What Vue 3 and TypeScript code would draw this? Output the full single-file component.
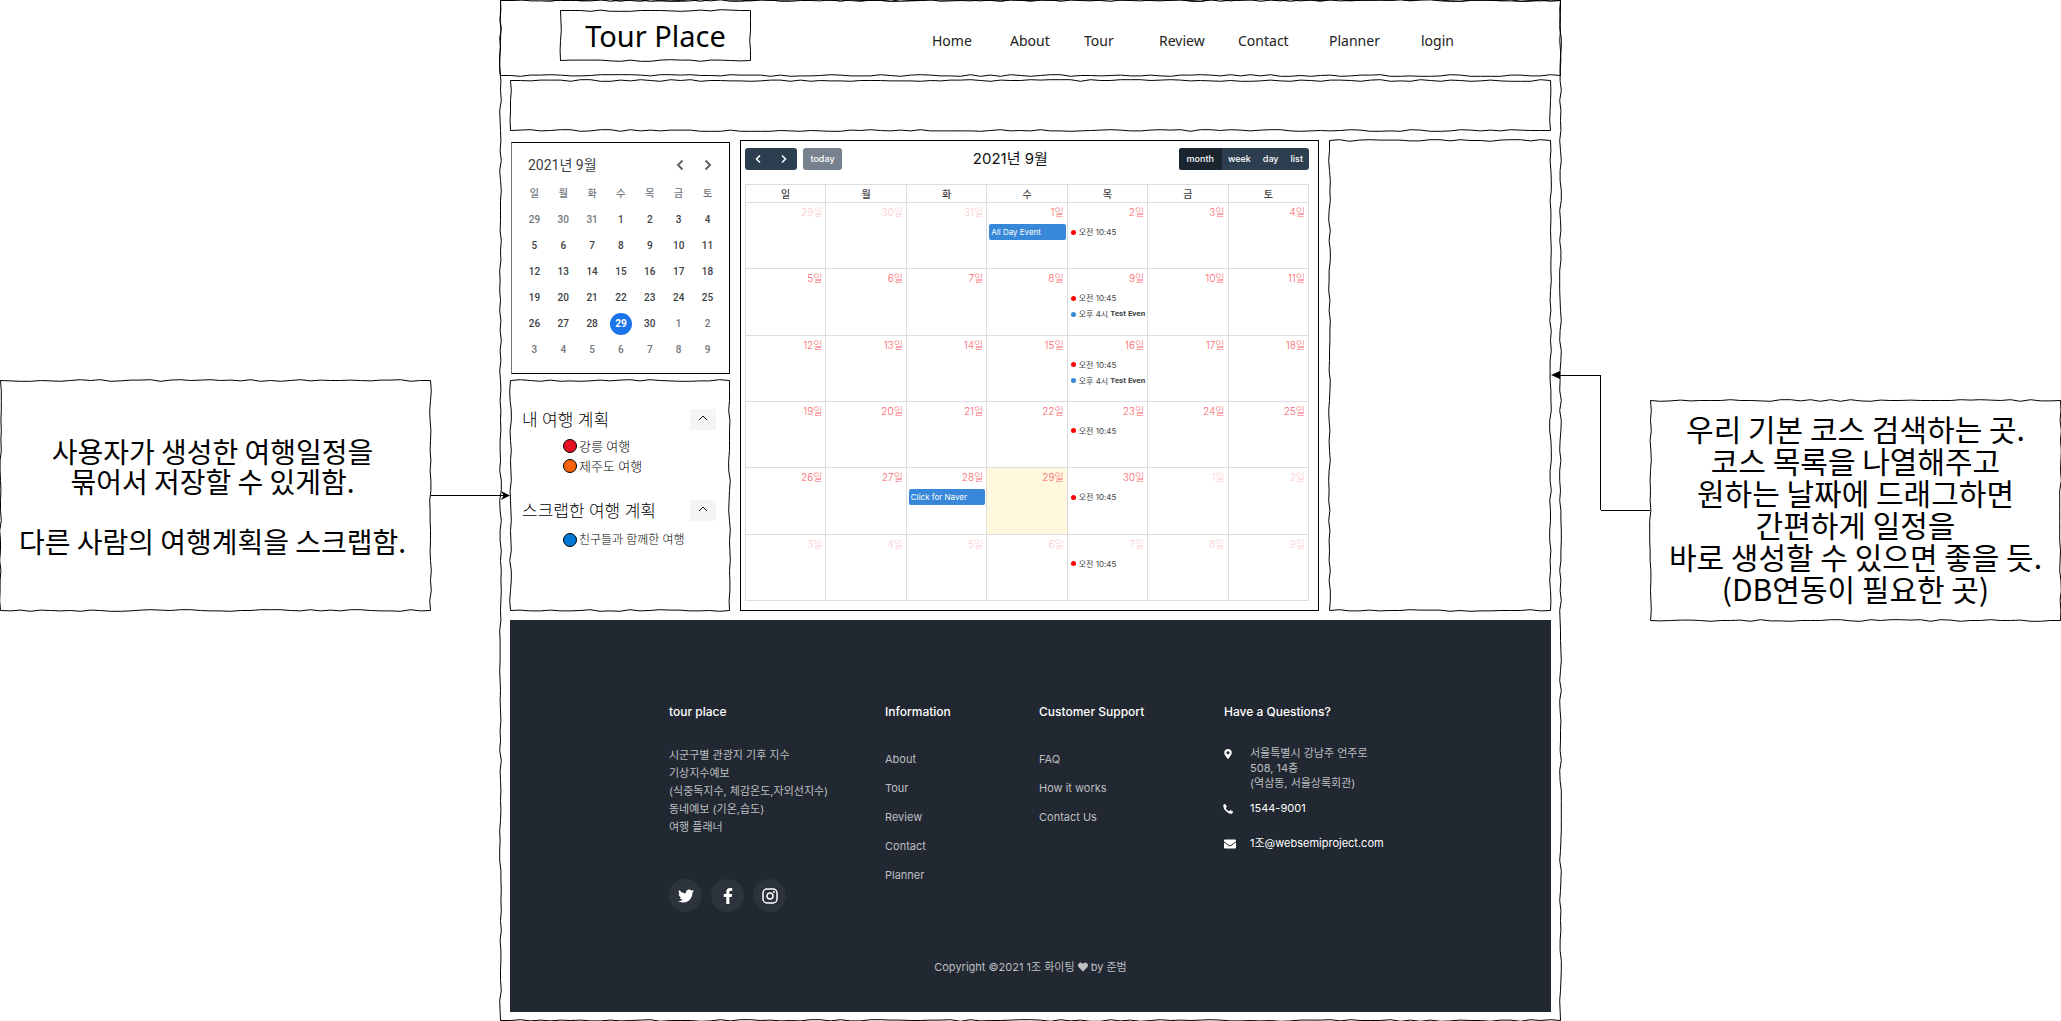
<script setup lang="ts">
import { defineComponent, h, onBeforeUnmount, onMounted, ref } from 'vue'

/* Hand-drawn outline that follows the size of the box it sits in. */
const SketchFrame = defineComponent({
  props: { seed: { type: Number, default: 1 } },
  setup(props) {
    const svg = ref<SVGSVGElement | null>(null)
    const outline = ref('')
    let observer: ResizeObserver | undefined

    function draw() {
      if (!svg.value) return
      const box = svg.value.getBoundingClientRect()
      const right = box.width - 0.5
      const bottom = box.height - 0.5
      let state = props.seed * 7919
      const wobble = () => {
        state = (state * 1103515245 + 12345) % 2147483648
        return (Math.floor(state / 65536) % 5) * 0.4 - 0.8
      }
      const edge = (x1: number, y1: number, x2: number, y2: number) => {
        const length = Math.abs(x2 - x1) + Math.abs(y2 - y1)
        const across = y1 === y2
        const steps = Math.max(1, Math.round(length / 10))
        let points = ''
        for (let i = 1; i < steps; i++) {
          const x = x1 + ((x2 - x1) * i) / steps + (across ? 0 : wobble())
          const y = y1 + ((y2 - y1) * i) / steps + (across ? wobble() : 0)
          points += `L${x.toFixed(2)} ${y.toFixed(2)}`
        }
        return `${points}L${x2} ${y2}`
      }
      outline.value =
        'M0.5 0.5' +
        edge(0.5, 0.5, right, 0.5) +
        edge(right, 0.5, right, bottom) +
        edge(right, bottom, 0.5, bottom) +
        edge(0.5, bottom, 0.5, 0.5) +
        'Z'
    }

    onMounted(() => {
      draw()
      observer = new ResizeObserver(draw)
      if (svg.value) observer.observe(svg.value)
    })
    onBeforeUnmount(() => observer?.disconnect())

    return () =>
      h('svg', { ref: svg, class: 'sketch', 'aria-hidden': 'true' }, [
        h('path', { d: outline.value, fill: 'none', stroke: '#000', 'stroke-width': 1 }),
      ])
  },
})

interface CalendarEvent {
  kind: 'block' | 'red' | 'blue'
  time?: string
  title?: string
}
interface Day {
  date: number
  outside: boolean
  today: boolean
  events: CalendarEvent[]
}

const navItems = ['Home', 'About', 'Tour', 'Review', 'Contact', 'Planner', 'login']
const weekdays = ['일', '월', '화', '수', '목', '금', '토']

const weeks: Day[][] = Array.from({ length: 6 }, (_, week) =>
  Array.from({ length: 7 }, (_, weekday) => {
    const offset = week * 7 + weekday - 2
    const date = offset < 1 ? offset + 31 : offset > 30 ? offset - 30 : offset
    const outside = offset < 1 || offset > 30
    const events: CalendarEvent[] = []
    if (offset === 1) events.push({ kind: 'block', title: 'All Day Event' })
    if (offset === 28) events.push({ kind: 'block', title: 'Click for Naver' })
    if (weekday === 4) events.push({ kind: 'red', time: '오전 10:45' })
    if (offset === 9 || offset === 16) {
      events.push({ kind: 'blue', time: '오후 4시', title: 'Test Even' })
    }
    return { date, outside, today: offset === 29, events }
  }),
)

const views = ['month', 'week', 'day', 'list']
const activeView = ref('month')

const plans = [
  {
    title: '내 여행 계획',
    items: [
      { label: '강릉 여행', tone: 'red' },
      { label: '제주도 여행', tone: 'orange' },
    ],
  },
  {
    title: '스크랩한 여행 계획',
    items: [{ label: '친구들과 함께한 여행', tone: 'blue' }],
  },
]

const infoLinks = ['About', 'Tour', 'Review', 'Contact', 'Planner']
const supportLinks = ['FAQ', 'How it works', 'Contact Us']
</script>

<template>
  <div class="board">
    <aside class="note note-left">
      <SketchFrame :seed="3" />
      <p>사용자가 생성한 여행일정을<br />묶어서 저장할 수 있게함.<br /><br />다른 사람의 여행계획을 스크랩함.</p>
    </aside>

    <div class="link-left" aria-hidden="true">
      <span class="line"></span>
      <svg class="arrow" viewBox="0 0 9 9"><path d="M0 0L9 4.5L0 9L2.5 4.5Z" /></svg>
    </div>

    <main class="site">
      <SketchFrame :seed="5" />
      <header class="top">
        <SketchFrame :seed="8" />
        <h1 class="logo"><SketchFrame :seed="11" />Tour Place</h1>
        <nav class="nav">
          <a v-for="item in navItems" :key="item" href="#">{{ item }}</a>
        </nav>
      </header>

      <div class="content">
        <section class="banner"><SketchFrame :seed="14" /></section>

        <div class="columns">
          <div class="side">
            <section class="mini">
              <div class="mini-head">
                <h2>2021년 9월</h2>
                <button type="button" aria-label="이전 달">
                  <svg viewBox="0 0 8 10"><path d="M6.5 0.5L2 5L6.5 9.5" /></svg>
                </button>
                <button type="button" aria-label="다음 달">
                  <svg viewBox="0 0 8 10"><path d="M1.5 0.5L6 5L1.5 9.5" /></svg>
                </button>
              </div>
              <table>
                <thead>
                  <tr><th v-for="name in weekdays" :key="name">{{ name }}</th></tr>
                </thead>
                <tbody>
                  <tr v-for="(week, w) in weeks" :key="w">
                    <td v-for="(day, d) in week" :key="d" :class="{ outside: day.outside }">
                      <span :class="{ today: day.today }">{{ day.date }}</span>
                    </td>
                  </tr>
                </tbody>
              </table>
            </section>

            <section class="plans">
              <SketchFrame :seed="17" />
              <div v-for="group in plans" :key="group.title" class="plan-group">
                <div class="plan-head">
                  <h2>{{ group.title }}</h2>
                  <button type="button" :aria-label="group.title">
                    <svg viewBox="0 0 10 6"><path d="M1 5L5 1L9 5" /></svg>
                  </button>
                </div>
                <ul>
                  <li v-for="item in group.items" :key="item.label">
                    <i :class="['swatch', item.tone]"></i>{{ item.label }}
                  </li>
                </ul>
              </div>
            </section>
          </div>

          <section class="calendar">
            <div class="toolbar">
              <div class="left-tools">
                <div class="group">
                  <button type="button" class="step" aria-label="이전">
                    <svg viewBox="0 0 6 8"><path d="M5 0.5L1.5 4L5 7.5" /></svg>
                  </button>
                  <button type="button" class="step" aria-label="다음">
                    <svg viewBox="0 0 6 8"><path d="M1 0.5L4.5 4L1 7.5" /></svg>
                  </button>
                </div>
                <button type="button" class="today-btn" disabled>today</button>
              </div>
              <h2>2021년 9월</h2>
              <div class="group">
                <button
                  v-for="view in views"
                  :key="view"
                  type="button"
                  :class="['view', { active: view === activeView }]"
                  @click="activeView = view"
                >
                  {{ view }}
                </button>
              </div>
            </div>
            <table>
              <thead>
                <tr><th v-for="name in weekdays" :key="name">{{ name }}</th></tr>
              </thead>
              <tbody>
                <tr v-for="(week, w) in weeks" :key="w">
                  <td v-for="(day, d) in week" :key="d" :class="{ outside: day.outside, today: day.today }">
                    <a class="date" href="#">{{ day.date }}일</a>
                    <div v-for="(event, e) in day.events" :key="e" :class="['event', event.kind]">
                      <i v-if="event.kind !== 'block'" class="dot"></i>
                      <span v-if="event.time">{{ event.time }}</span>
                      <b v-if="event.title">{{ event.title }}</b>
                    </div>
                  </td>
                </tr>
              </tbody>
            </table>
          </section>

          <section class="search"><SketchFrame :seed="20" /></section>
        </div>

        <footer class="footer">
          <div class="footer-grid">
            <div>
              <h3>tour place</h3>
              <p class="about">시군구별 관광지 기후 지수<br />기상지수예보<br />(식중독지수, 체감온도,자외선지수)<br />동네예보 (기온,습도)<br />여행 플래너</p>
              <div class="social">
                <a href="#" aria-label="Twitter">
                  <svg viewBox="0 0 512 512"><path d="M459.37 151.716c.325 4.548.325 9.097.325 13.645 0 138.72-105.583 298.558-298.558 298.558-59.452 0-114.68-17.219-161.137-47.106 8.447.974 16.568 1.299 25.34 1.299 49.055 0 94.213-16.568 130.274-44.832-46.132-.975-84.792-31.188-98.112-72.772 6.498.974 12.995 1.624 19.818 1.624 9.421 0 18.843-1.3 27.614-3.573-48.081-9.747-84.143-51.98-84.143-102.985v-1.299c13.969 7.797 30.214 12.67 47.431 13.319-28.264-18.843-46.781-51.005-46.781-87.391 0-19.492 5.197-37.36 14.294-52.954 51.655 63.675 129.3 105.258 216.365 109.807-1.624-7.797-2.599-15.918-2.599-24.04 0-57.828 46.782-104.934 104.934-104.934 30.213 0 57.502 12.67 76.67 33.137 23.715-4.548 46.456-13.32 66.599-25.34-7.798 24.366-24.366 44.833-46.132 57.827 21.117-2.273 41.584-8.122 60.426-16.243-14.292 20.791-32.161 39.308-52.628 54.253z" /></svg>
                </a>
                <a href="#" aria-label="Facebook">
                  <svg viewBox="0 0 320 512"><path d="M279.14 288l14.22-92.66h-88.91v-60.13c0-25.35 12.42-50.06 52.24-50.06h40.42V6.26S260.43 0 225.36 0c-73.22 0-121.08 44.38-121.08 124.72v70.62H22.89V288h81.39v224h100.17V288z" /></svg>
                </a>
                <a href="#" aria-label="Instagram">
                  <svg viewBox="0 0 16 16">
                    <rect x="1" y="1" width="14" height="14" rx="4" class="ring" />
                    <circle cx="8" cy="8" r="3" class="ring" />
                    <circle cx="12" cy="4" r="1" />
                  </svg>
                </a>
              </div>
            </div>
            <div>
              <h3>Information</h3>
              <ul class="links">
                <li v-for="link in infoLinks" :key="link"><a href="#">{{ link }}</a></li>
              </ul>
            </div>
            <div>
              <h3>Customer Support</h3>
              <ul class="links">
                <li v-for="link in supportLinks" :key="link"><a href="#">{{ link }}</a></li>
              </ul>
            </div>
            <div>
              <h3>Have a Questions?</h3>
              <ul class="contact">
                <li class="address">
                  <svg viewBox="0 0 384 512"><path d="M172.268 501.67C26.97 291.031 0 269.413 0 192 0 85.961 85.961 0 192 0s192 85.961 192 192c0 77.413-26.97 99.031-172.268 309.67-9.535 13.774-29.93 13.773-39.464 0zM192 272c44.183 0 80-35.817 80-80s-35.817-80-80-80-80 35.817-80 80 35.817 80 80 80z" /></svg>
                  <span>서울특별시 강남주 언주로<br />508, 14층<br />(역삼동, 서울상록회관)</span>
                </li>
                <li class="phone">
                  <svg viewBox="0 0 11 11"><path d="M0.3 1.6Q0.6 0.4 2 0.1Q2.6 0 2.9 0.5L4 2.6Q4.2 3.1 3.8 3.5L3 4.3Q3.2 5.2 4.5 6.5T6.7 8L7.5 7.2Q7.9 6.8 8.4 7L10.5 8.1Q11 8.4 10.9 9Q10.6 10.4 9.4 10.7Q7 11.4 3.5 8T0.3 1.6Z" /></svg>
                  <a href="#">1544-9001</a>
                </li>
                <li class="mail">
                  <svg viewBox="0 64 512 384"><path d="M502.3 190.8c3.9-3.1 9.7-.2 9.7 4.7V400c0 26.5-21.5 48-48 48H48c-26.5 0-48-21.5-48-48V195.6c0-5 5.7-7.8 9.7-4.7 22.4 17.4 52.1 39.5 154.1 113.6 21.1 15.4 56.7 47.8 92.2 47.6 35.7.3 72-32.8 92.3-47.6 102-74.1 131.6-96.3 154-113.7zM256 320c23.2.4 56.6-29.2 73.4-41.4 132.7-96.3 142.8-104.7 173.4-128.7 5.8-4.5 9.2-11.5 9.2-18.9v-19c0-26.5-21.5-48-48-48H48c-26.5 0-48 21.5-48 48v19c0 7.4 3.4 14.3 9.2 18.9 30.6 23.9 40.7 32.4 173.4 128.7 16.8 12.2 50.2 41.8 73.4 41.4z" /></svg>
                  <a href="#">1조@websemiproject.com</a>
                </li>
              </ul>
            </div>
          </div>
          <p class="copyright">
            Copyright ©2021 1조 화이팅
            <svg viewBox="0 0 512 512"><path d="M462.3 62.6C407.5 15.9 326 24.3 275.7 76.2L256 96.5l-19.7-20.3C186.1 24.3 104.5 15.9 49.7 62.6c-62.8 53.6-66.1 149.8-9.9 207.9l193.5 199.8c12.5 12.9 32.8 12.9 45.3 0l193.5-199.8c56.3-58.1 53-154.3-9.8-207.9z" /></svg>
            by 준범
          </p>
        </footer>
      </div>
    </main>

    <svg class="link-right" aria-hidden="true">
      <line x1="4" y1="5" x2="50%" y2="5" />
      <line x1="50%" y1="5" x2="50%" y2="140" />
      <line x1="50%" y1="140" x2="100%" y2="140" />
      <path d="M0 5L9 1V9Z" />
    </svg>

    <aside class="note note-right">
      <SketchFrame :seed="23" />
      <p>우리 기본 코스 검색하는 곳.<br />코스 목록을 나열해주고<br />원하는 날짜에 드래그하면<br />간편하게 일정을<br />바로 생성할 수 있으면 좋을 듯.<br />(DB연동이 필요한 곳)</p>
    </aside>
  </div>
</template>

<style>
body {
  margin: 0;
  background: #fff;
}
</style>

<style scoped>
.board {
  display: grid;
  grid-template-columns: 431fr 69fr 1061fr 89fr 411fr;
  align-items: start;
  font-family: 'Noto Sans', 'Noto Sans CJK KR', sans-serif;
  color: #000;
}
h1, h2, h3, p, ul {
  margin: 0;
  padding: 0;
  font-weight: 400;
}
ul {
  list-style: none;
}
a {
  color: inherit;
  text-decoration: none;
}
button {
  border: 0;
  padding: 0;
  margin: 0;
  background: none;
  font: inherit;
  color: inherit;
  cursor: pointer;
}
table {
  border-collapse: collapse;
  table-layout: fixed;
  width: 100%;
}
.sketch {
  position: absolute;
  inset: 0;
  width: 100%;
  height: 100%;
  overflow: visible;
  pointer-events: none;
}

/* notes and connectors */
.note {
  position: relative;
  display: flex;
  align-items: center;
  justify-content: center;
  box-sizing: border-box;
  text-align: center;
  white-space: nowrap;
  font-family: 'Noto Sans CJK KR', sans-serif;
  font-weight: 300;
}
.note-left {
  margin-top: 380px;
  min-height: 231px;
  padding-right: 6px;
  font-size: 28px;
  line-height: 30px;
}
.note-right {
  margin-top: 400px;
  min-height: 221px;
  padding-bottom: 5px;
  font-size: 30px;
  line-height: 32px;
}
.link-left {
  display: flex;
  align-items: center;
  margin: 491px -10px 0 0;
  position: relative;
  z-index: 1;
}
.link-left .line {
  flex: 1;
  height: 1px;
  margin-right: -4px;
  background: #000;
}
.arrow {
  width: 9px;
  height: 9px;
}
.link-right {
  width: calc(100% + 10px);
  height: 146px;
  margin: 370px 0 0 -10px;
  position: relative;
  z-index: 1;
}
.link-right line {
  stroke: #000;
  shape-rendering: crispEdges;
}

/* site frame */
.site {
  position: relative;
  padding-bottom: 9px;
}
.top {
  position: relative;
  display: flex;
  align-items: flex-start;
  justify-content: space-between;
  box-sizing: border-box;
  height: 76px;
  padding: 10px 107px 0 60px;
}
.logo {
  position: relative;
  width: 191px;
  font-size: 29px;
  line-height: 51px;
  text-align: center;
}
.nav {
  display: grid;
  grid-template-columns: 78fr 74fr 75fr 79fr 91fr 92fr 33fr;
  width: 522px;
  padding-top: 21px;
  font-size: 14px;
  line-height: 20px;
  color: #222;
}
.content {
  padding: 4px 10px 0;
}
.banner {
  position: relative;
  height: 51px;
}
.columns {
  display: grid;
  grid-template-columns: 220fr 579fr 222fr;
  gap: 10px;
  margin: 9px 0;
}
.search {
  position: relative;
}
.side {
  display: flex;
  flex-direction: column;
  gap: 6px;
  padding-top: 2px;
}

/* mini calendar */
.mini {
  margin-left: 1px;
  padding: 12px 7px 10px 8px;
  border: 1px solid #000;
  border-left-color: #777;
  font-family: Roboto, 'Noto Sans CJK KR', sans-serif;
}
.mini-head {
  display: flex;
  align-items: center;
  height: 20px;
  margin-bottom: 6px;
  padding: 0 4px 0 8px;
  color: #5f6368;
}
.mini-head h2 {
  flex: 1;
  font-size: 14px;
  line-height: 20px;
  color: #3c4043;
}
.mini-head button {
  width: 20px;
  height: 20px;
  margin-left: 8px;
}
.mini-head svg {
  display: block;
  width: 8px;
  height: 10px;
  margin: auto;
  fill: none;
  stroke: #5f6368;
  stroke-width: 2;
}
.mini th,
.mini td {
  height: 26px;
  padding: 0;
  text-align: center;
  font-size: 10px;
  line-height: 16px;
  font-weight: 500;
  color: #3c4043;
}
.mini th,
.mini .outside {
  color: #70757a;
}
.mini td span {
  display: block;
  width: 22px;
  margin: 0 auto;
  line-height: 22px;
  border-radius: 50%;
}
.mini td .today {
  background: #1a73e8;
  color: #fff;
  font-weight: 700;
}

/* plans */
.plans {
  position: relative;
  flex: 1;
  padding: 29px 14px 0 12px;
}
.plan-group {
  min-height: 91px;
}
.plan-head {
  display: flex;
  justify-content: space-between;
}
.plan-head h2 {
  font-size: 17px;
  line-height: 22px;
  font-weight: 300;
}
.plan-head button {
  width: 26px;
  height: 21px;
  background: #f5f5f5;
}
.plan-head svg {
  display: block;
  width: 10px;
  height: 6px;
  margin: 0 auto 4px;
  fill: none;
  stroke: #111;
}
.plans ul {
  padding: 5px 0 0 41px;
}
.plans li {
  display: flex;
  align-items: center;
  gap: 2px;
  height: 20px;
  font-size: 13px;
  line-height: 20px;
  font-weight: 300;
  white-space: nowrap;
}
.plan-group:last-child ul {
  padding-top: 8px;
}
.plan-group:last-child li {
  font-size: 12px;
}
.swatch {
  box-sizing: border-box;
  width: 14px;
  height: 14px;
  border: 1px solid #000;
  border-radius: 50%;
}
.swatch.red { background: #e81123; }
.swatch.orange { background: #f7630c; }
.swatch.blue { background: #0078d7; }

/* main calendar */
.calendar {
  padding: 7px 9px 9px 4px;
  border: 1px solid #000;
  font-family: Inter, 'Noto Sans CJK KR', sans-serif;
}
.toolbar {
  display: flex;
  align-items: center;
  justify-content: space-between;
  height: 22px;
  margin-bottom: 14px;
}
.toolbar h2 {
  font-size: 15px;
  line-height: 22px;
  font-weight: 400;
  color: #111;
}
.left-tools {
  display: flex;
  gap: 6px;
}
.group {
  display: flex;
  overflow: hidden;
  border-radius: 3px;
  background: #2c3e50;
  color: #fff;
}
.group button {
  height: 22px;
}
.step {
  width: 26px;
}
.step svg {
  display: block;
  width: 6px;
  height: 8px;
  margin: auto;
  fill: none;
  stroke: #fff;
  stroke-width: 1.5;
}
.today-btn,
.view {
  font-size: 9px;
  line-height: 22px;
  font-weight: 500;
}
.view {
  padding: 0 6px;
}
.view.active {
  padding: 0 8px;
  background: #1a252f;
}
.today-btn {
  width: 39px;
  border-radius: 3px;
  background: #76818d;
  color: #fff;
}
.calendar table {
  height: 417px;
}
.calendar th,
.calendar td {
  padding: 0;
  border: 1px solid #ddd;
}
.calendar th {
  height: 17px;
  font-size: 10px;
  line-height: 16px;
  font-weight: 500;
  color: #444;
}
.calendar td {
  height: 65px;
  vertical-align: top;
}
.calendar td.today {
  background: #fff8df;
}
.date {
  display: block;
  padding: 2px 3px 5px 0;
  font-size: 10px;
  line-height: 14px;
  font-weight: 300;
  text-align: right;
  color: #fb5f68;
}
.outside .date {
  opacity: 0.35;
}
.event {
  display: flex;
  align-items: center;
  gap: 2px;
  height: 16px;
  overflow: hidden;
  padding-left: 3px;
  white-space: nowrap;
  font-size: 8px;
  line-height: 16px;
  color: #444;
}
.event b {
  font-family: Roboto, sans-serif;
  font-weight: 700;
}
.event.block {
  margin: 0 1px 0 2px;
  padding-left: 2px;
  border-radius: 2px;
  background: #3788d8;
  color: #fff;
}
.event.block b {
  font-family: inherit;
  font-weight: 400;
}
.dot {
  flex: none;
  width: 5px;
  height: 5px;
  margin-right: 1px;
  border-radius: 50%;
  background: #f00;
}
.blue .dot {
  background: #3788d8;
}

/* footer */
.footer {
  padding: 82px 0 35px;
  background: #222831;
  color: #bdbfc1;
  font-family: Inter, 'Noto Sans CJK KR', sans-serif;
  font-size: 11px;
}
.footer-grid {
  display: grid;
  grid-template-columns: 216fr 154fr 185fr 168fr;
  padding: 0 159px;
  white-space: nowrap;
}
.footer h3 {
  font-size: 12px;
  line-height: 20px;
  font-weight: 500;
  color: #fff;
}
.about {
  margin-top: 24px;
  line-height: 18px;
}
.social {
  display: flex;
  gap: 9px;
  margin-top: 43px;
}
.social a {
  display: flex;
  align-items: center;
  justify-content: center;
  width: 33px;
  height: 33px;
  border-radius: 50%;
  background: #2d333c;
}
.social svg {
  width: 16px;
  height: 16px;
  fill: #fff;
}
.social .ring {
  fill: none;
  stroke: #fff;
  stroke-width: 1.5;
}
.links {
  margin-top: 23px;
  line-height: 29px;
}
.contact {
  margin-top: 24px;
  line-height: 15px;
}
.contact li {
  display: flex;
}
.contact a {
  color: #fff;
}
.contact svg {
  width: 12px;
  height: 10px;
  margin: 3px 14px 0 0;
  fill: #fff;
}
.address svg,
.phone svg {
  width: 10px;
  margin-left: -1px;
  margin-right: 17px;
}
.phone {
  margin: 10px 0 20px;
}
.copyright {
  margin-top: 45px;
  line-height: 20px;
  text-align: center;
}
.copyright svg {
  width: 10px;
  height: 10px;
  fill: currentColor;
  vertical-align: -1px;
}
</style>
